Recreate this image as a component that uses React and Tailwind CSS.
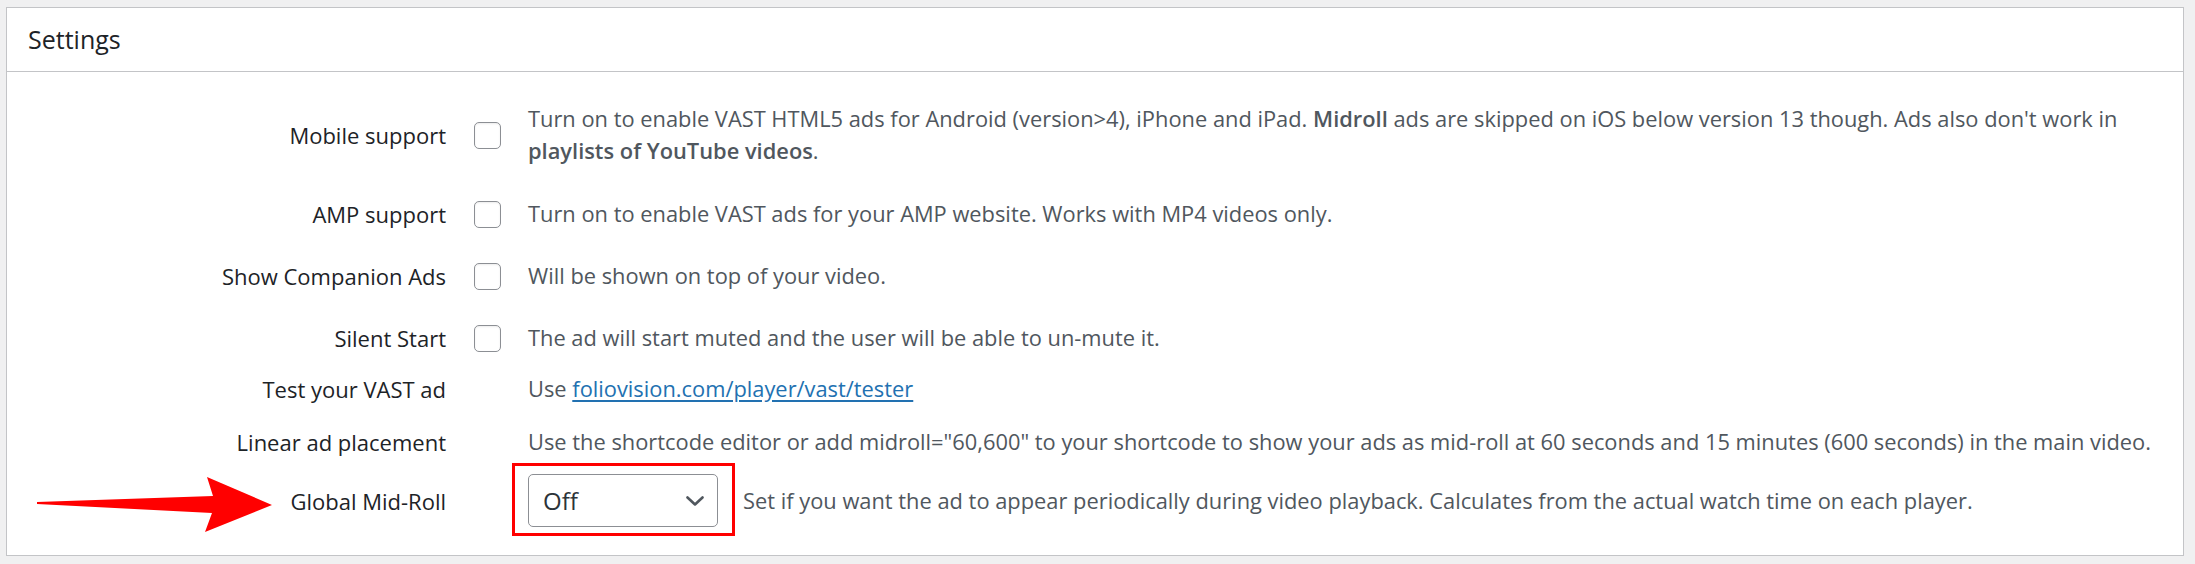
import React from 'react';

const font = "font-['Open_Sans','Noto_Sans',sans-serif]";

function Checkbox() {
    return <div className="w-[27px] h-[27px] rounded-[5px] border border-[#8c8f94] bg-white shadow-[inset_0_1px_2px_rgba(0,0,0,0.08)]" />;
}

function Row({ label, control, children, className = '' }) {
    return (
        <div className={`flex items-center ${className}`}>
            <div className="w-[439px] shrink-0 text-right text-[#1d2327]">{label}</div>
            <div className="ml-[28px] w-[27px] shrink-0 flex items-center">{control}</div>
            <div className="ml-[27px] flex-1 text-[#50575e] text-[21.85px] whitespace-nowrap">{children}</div>
        </div>
    );
}

export default function App() {
    return (
        <div className={`min-h-screen bg-[#f0f0f1] pt-[7px] pl-[6px] pr-[11px] ${font}`}>
            <div className="border border-[#c3c4c7] bg-white">
                <div className="h-[64px] border-b border-[#c3c4c7] flex items-center pl-[21px] text-[25px] text-[#1d2327]">
                    Settings
                </div>

                <div className="pt-[31px] pb-[28px] text-[22px] leading-[32px]">
                    <Row label="Mobile support" control={<Checkbox />}>
                        Turn on to enable VAST HTML5 ads for Android (version&gt;4), iPhone and iPad. <b className="font-semibold">Midroll</b> ads are skipped on iOS below version 13 though. Ads also don't work in
                        <br />
                        <b className="font-semibold">playlists of YouTube videos</b>.
                    </Row>
                    <Row className="mt-[31px]" label="AMP support" control={<Checkbox />}>
                        Turn on to enable VAST ads for your AMP website. Works with MP4 videos only.
                    </Row>
                    <Row className="mt-[30px]" label="Show Companion Ads" control={<Checkbox />}>
                        Will be shown on top of your video.
                    </Row>
                    <Row className="mt-[30px]" label="Silent Start" control={<Checkbox />}>
                        The ad will start muted and the user will be able to un-mute it.
                    </Row>
                    <Row className="mt-[19px]" label="Test your VAST ad">
                        Use <a href="#" className="text-[#2271b1] underline underline-offset-[3px]">foliovision.com/player/vast/tester</a>
                    </Row>
                    <Row className="mt-[21px]" label="Linear ad placement">
                        Use the shortcode editor or add midroll="60,600" to your shortcode to show your ads as mid-roll at 60 seconds and 15 minutes (600 seconds) in the main video.
                    </Row>

                    {/* global mid-roll, with the annotation arrow + box */}
                    <div className="relative mt-[16px] flex items-center">
                        <svg className="absolute left-0 top-0 w-[280px] h-[60px] overflow-visible" viewBox="0 0 280 60">
                            <polygon points="30,28 206,22 200,3 265,31 198,58 205,39 30,30" fill="#ff0000" />
                        </svg>
                        <div className="w-[439px] shrink-0 text-right text-[#1d2327]">Global Mid-Roll</div>
                        <div className="ml-[28px] w-[27px] shrink-0" />
                        <div className="relative ml-[27px] w-[190px] h-[53px] shrink-0">
                            <div className="absolute -left-[16px] -top-[11px] -right-[17px] -bottom-[9px] border-[3px] border-[#ff0000]" />
                            <div className="relative h-full rounded-[5px] border border-[#8c8f94] bg-white flex items-center justify-between pl-[14px] pr-[13px] text-[24px] text-[#2c3338]">
                                <span>Off</span>
                                <svg width="18" height="10" viewBox="0 0 18 10" fill="none">
                                    <path d="M1.5 1.5 L9 8.5 L16.5 1.5" stroke="#50575e" strokeWidth="2.6" strokeLinecap="round" strokeLinejoin="round" />
                                </svg>
                            </div>
                        </div>
                        <div className="ml-[25px] text-[#50575e] text-[21.85px] whitespace-nowrap">
                            Set if you want the ad to appear periodically during video playback. Calculates from the actual watch time on each player.
                        </div>
                    </div>
                </div>
            </div>
        </div>
    );
}
